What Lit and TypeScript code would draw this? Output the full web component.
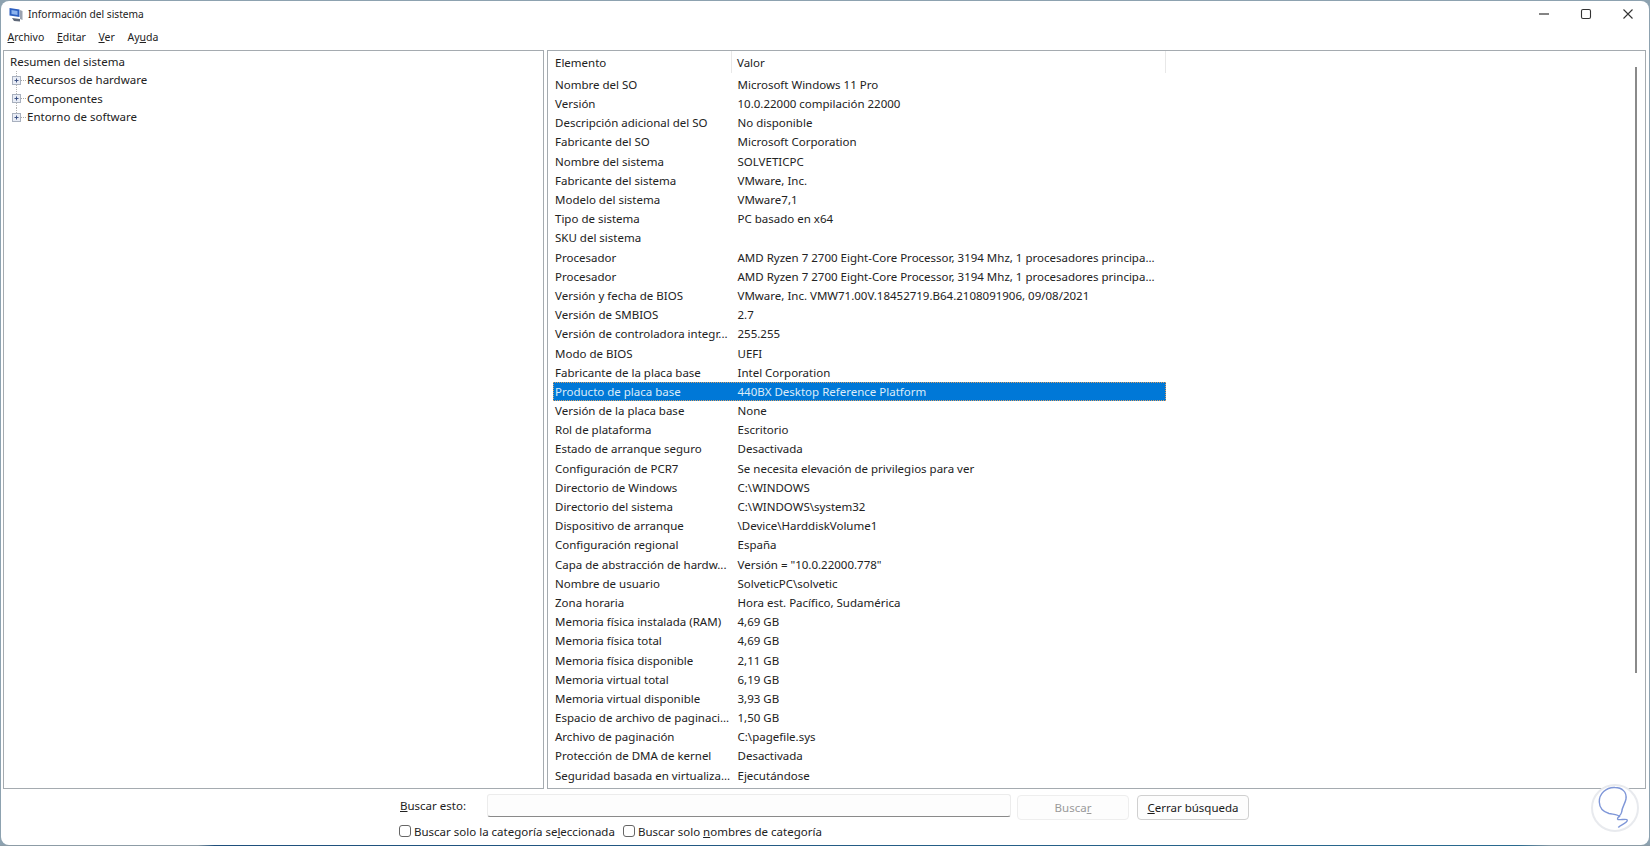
import { LitElement, html, css } from "lit";
import { customElement } from "lit/decorators.js";

const ROWS: [string, string][] = [
  ["Nombre del SO", "Microsoft Windows 11 Pro"],
  ["Versión", "10.0.22000 compilación 22000"],
  ["Descripción adicional del SO", "No disponible"],
  ["Fabricante del SO", "Microsoft Corporation"],
  ["Nombre del sistema", "SOLVETICPC"],
  ["Fabricante del sistema", "VMware, Inc."],
  ["Modelo del sistema", "VMware7,1"],
  ["Tipo de sistema", "PC basado en x64"],
  ["SKU del sistema", ""],
  ["Procesador", "AMD Ryzen 7 2700 Eight-Core Processor, 3194 Mhz, 1 procesadores principa..."],
  ["Procesador", "AMD Ryzen 7 2700 Eight-Core Processor, 3194 Mhz, 1 procesadores principa..."],
  ["Versión y fecha de BIOS", "VMware, Inc. VMW71.00V.18452719.B64.2108091906, 09/08/2021"],
  ["Versión de SMBIOS", "2.7"],
  ["Versión de controladora integr...", "255.255"],
  ["Modo de BIOS", "UEFI"],
  ["Fabricante de la placa base", "Intel Corporation"],
  ["Producto de placa base", "440BX Desktop Reference Platform"],
  ["Versión de la placa base", "None"],
  ["Rol de plataforma", "Escritorio"],
  ["Estado de arranque seguro", "Desactivada"],
  ["Configuración de PCR7", "Se necesita elevación de privilegios para ver"],
  ["Directorio de Windows", "C:\\WINDOWS"],
  ["Directorio del sistema", "C:\\WINDOWS\\system32"],
  ["Dispositivo de arranque", "\\Device\\HarddiskVolume1"],
  ["Configuración regional", "España"],
  ["Capa de abstracción de hardw...", "Versión = \"10.0.22000.778\""],
  ["Nombre de usuario", "SolveticPC\\solvetic"],
  ["Zona horaria", "Hora est. Pacífico, Sudamérica"],
  ["Memoria física instalada (RAM)", "4,69 GB"],
  ["Memoria física total", "4,69 GB"],
  ["Memoria física disponible", "2,11 GB"],
  ["Memoria virtual total", "6,19 GB"],
  ["Memoria virtual disponible", "3,93 GB"],
  ["Espacio de archivo de paginaci...", "1,50 GB"],
  ["Archivo de paginación", "C:\\pagefile.sys"],
  ["Protección de DMA de kernel", "Desactivada"],
  ["Seguridad basada en virtualiza...", "Ejecutándose"],
];

@customElement("app-root")
export class AppRoot extends LitElement {
  static styles = css`
    :host {
      display: block;
      width: 1650px;
      height: 846px;
      background: linear-gradient(90deg, #8d9ca6 0 12%, #1f4f7c 13%, #2a6a8f 92%, #8d9ca6 94%) bottom / 100% 1px no-repeat, #8da2b0;
      font-family: "Noto Sans", "Open Sans", sans-serif;
      font-size: 11.5px;
      color: #222;
      overflow: hidden;
    }
    .win {
      position: relative;
      box-sizing: border-box;
      height: 844px;
      margin: 1px 0 0 1px;
      width: 1648px;
      background: #fff;
      border-radius: 8px;
      display: flex;
      flex-direction: column;
    }
    .titlebar {
      height: 26px;
      display: flex;
      align-items: center;
      padding-left: 8px;
      gap: 4px;
      flex: none;
    }
    .title { flex: 1; font-size: 10.2px; padding-left: 1px; }
    .ctl { width: 42px; display: flex; justify-content: center; margin-left: -4px; }
    .ctl svg { display: block; }
    .menu {
      height: 23px;
      box-sizing: border-box;
      padding: 0 0 3px 6.5px;
      display: flex;
      align-items: center;
      font-size: 10.5px;
      flex: none;
    }
    .menu span { margin-right: 12.6px; }
    .panes {
      height: 739px;
      flex: none;
      display: flex;
      gap: 3px;
      padding: 0 3px 0 2px;
    }
    .pane {
      box-sizing: border-box;
      border: 1px solid #a5abb0;
      background: #fff;
      height: 100%;
    }
    .left { width: 541px; flex: none; padding: 2px 0 0 6px; }
    .right { flex: 1; position: relative; padding-left: 5px; }
    .tnode { height: 18.3px; line-height: 18.3px; display: flex; align-items: center; }
    .tnode svg { flex: none; }
    .cols { width: 613px; }
    .hdr { display: flex; height: 23.8px; align-items: flex-start; }
    .hdr span { box-sizing: border-box; height: 22px; display: flex; align-items: center; padding-left: 2px; }
    .hdr .c1 { width: 179px; border-right: 1px solid #e8e8e8; }
    .hdr .c2 { flex: 1; border-right: 1px solid #e8e8e8; padding-left: 5px; }
    .row { display: flex; height: 19.2px; align-items: center; white-space: nowrap; }
    .row .c1 { width: 179.5px; padding-left: 2px; box-sizing: border-box; }
    .row .c2 { flex: 1; padding-left: 5px; }
    .row.sel { background: #0078d7; color: #dcecf9; outline: 1px dotted #d9a066; outline-offset: -1px; }
    .scroll {
      position: absolute;
      right: 8px;
      top: 16px;
      width: 2px;
      height: 606px;
      background: #8a8a8a;
    }
    .search {
      display: grid;
      grid-template-columns: 88px 524px 112px 112px;
      padding-left: 398px;
      flex: 1;
      align-content: start;
    }
    .s-label { height: 23px; margin-top: 5px; display: flex; align-items: center; padding-left: 1px; }
    .input {
      margin-top: 5px;
      height: 23px;
      box-sizing: border-box;
      background: #fdfdfd;
      border: 1px solid #ececec;
      border-bottom: 1px solid #8a8a8a;
      border-radius: 3px;
    }
    .btn {
      margin-top: 6px;
      height: 25px;
      box-sizing: border-box;
      border: 1px solid #d0d0d0;
      border-radius: 4px;
      background: #fdfdfd;
      display: flex;
      align-items: center;
      justify-content: center;
    }
    .btn.off { color: #9a9a9a; border-color: #eee; margin-left: 6px; width: 112px; }
    .btn.on { margin-left: 14px; width: 112px; color: #1a1a1a; }
    .checks {
      grid-column: 1 / -1;
      display: flex;
      align-items: center;
      height: 14px;
      margin-top: 4px;
    }
    .cb {
      box-sizing: border-box;
      width: 12px;
      height: 12px;
      border: 1px solid #666;
      border-radius: 3px;
      margin-right: 3px;
      flex: none;
    }
    .checks .t { margin-right: 8px; }
    .logo { position: absolute; right: 8px; bottom: 11px; }
    u { text-underline-offset: 1px; }
  `;

  plus(last = false) {
    return html`<svg width="17" height="19" viewBox="0 0 17 19">
      <path d="M6.5 0V${last ? 6 : 19}" stroke="#b4b4b4" stroke-dasharray="1 1" fill="none" />
      <path d="M11 9.5H16" stroke="#a8a8a8" stroke-dasharray="1 1" fill="none" />
      <rect x="2.5" y="5.5" width="8" height="8" fill="#e9edf6" stroke="#a9b1bf" />
      <path d="M4.5 9.5H8.5M6.5 7.5V11.5" stroke="#3f5485" fill="none" />
    </svg>`;
  }

  render() {
    return html`<div class="win">
      <div class="titlebar">
        <svg width="14" height="15" viewBox="0 0 14 15">
          <path d="M0.5 1L10.5 2.5V10L0.5 8.5Z" fill="#2c5fc0" />
          <path d="M2.5 3L8.5 4V8L2.5 7Z" fill="#8db4ee" />
          <path d="M3 11L11 12V14.5L5 14Z" fill="#5f6878" />
          <path d="M11 3L13.5 4V13L11 12Z" fill="#9aa2b0" />
        </svg>
        <span class="title">Información del sistema</span>
        <span class="ctl"><svg width="12" height="12" viewBox="0 0 12 12"><path d="M1 6H11" stroke="#333" stroke-width="1.2" /></svg></span>
        <span class="ctl"><svg width="12" height="12" viewBox="0 0 12 12"><rect x="1.5" y="1.5" width="9" height="9" rx="1.5" fill="none" stroke="#333" stroke-width="1.1" /></svg></span>
        <span class="ctl"><svg width="12" height="12" viewBox="0 0 12 12"><path d="M1.5 1.5L10.5 10.5M10.5 1.5L1.5 10.5" stroke="#333" stroke-width="1.1" /></svg></span>
      </div>
      <div class="menu">
        <span><u>A</u>rchivo</span><span><u>E</u>ditar</span><span><u>V</u>er</span><span>Ay<u>u</u>da</span>
      </div>
      <div class="panes">
        <div class="pane left">
          <div class="tnode">Resumen del sistema</div>
          <div class="tnode">${this.plus()}Recursos de hardware</div>
          <div class="tnode">${this.plus()}Componentes</div>
          <div class="tnode">${this.plus(true)}Entorno de software</div>
        </div>
        <div class="pane right">
          <div class="cols">
            <div class="hdr"><span class="c1">Elemento</span><span class="c2">Valor</span></div>
            ${ROWS.map(
              (r) => html`<div class="row ${r[0] === "Producto de placa base" ? "sel" : ""}">
                <span class="c1">${r[0]}</span><span class="c2">${r[1]}</span>
              </div>`
            )}
          </div>
          <div class="scroll"></div>
        </div>
      </div>
      <div class="search">
        <div class="s-label"><span><u>B</u>uscar esto:</span></div>
        <div class="input"></div>
        <div class="btn off"><span>Busca<u>r</u></span></div>
        <div class="btn on"><span><u>C</u>errar búsqueda</span></div>
        <div class="checks">
          <span class="cb"></span><span class="t">Buscar solo la categoría se<u>l</u>eccionada</span>
          <span class="cb"></span><span class="t">Buscar solo <u>n</u>ombres de categoría</span>
        </div>
      </div>
      <svg class="logo" width="52" height="52" viewBox="0 0 52 52">
        <circle cx="26" cy="26" r="23" fill="#fff" stroke="#e8eaee" stroke-width="2" />
        <path d="M26 5.5C17 5 10 12 10.3 20C10.5 27 15 30 20 31.5C25 32.5 29 32 31 35M26 5.5C33 5.5 38 10 37 17C36 22 33 25 32.7 30C32 34 28 35 28.5 37C29 39 38 36 38.3 38C38.5 41 31 43 29.3 45.5" fill="none" stroke="#7f97d8" stroke-width="1.4" />
      </svg>
    </div>`;
  }
}
